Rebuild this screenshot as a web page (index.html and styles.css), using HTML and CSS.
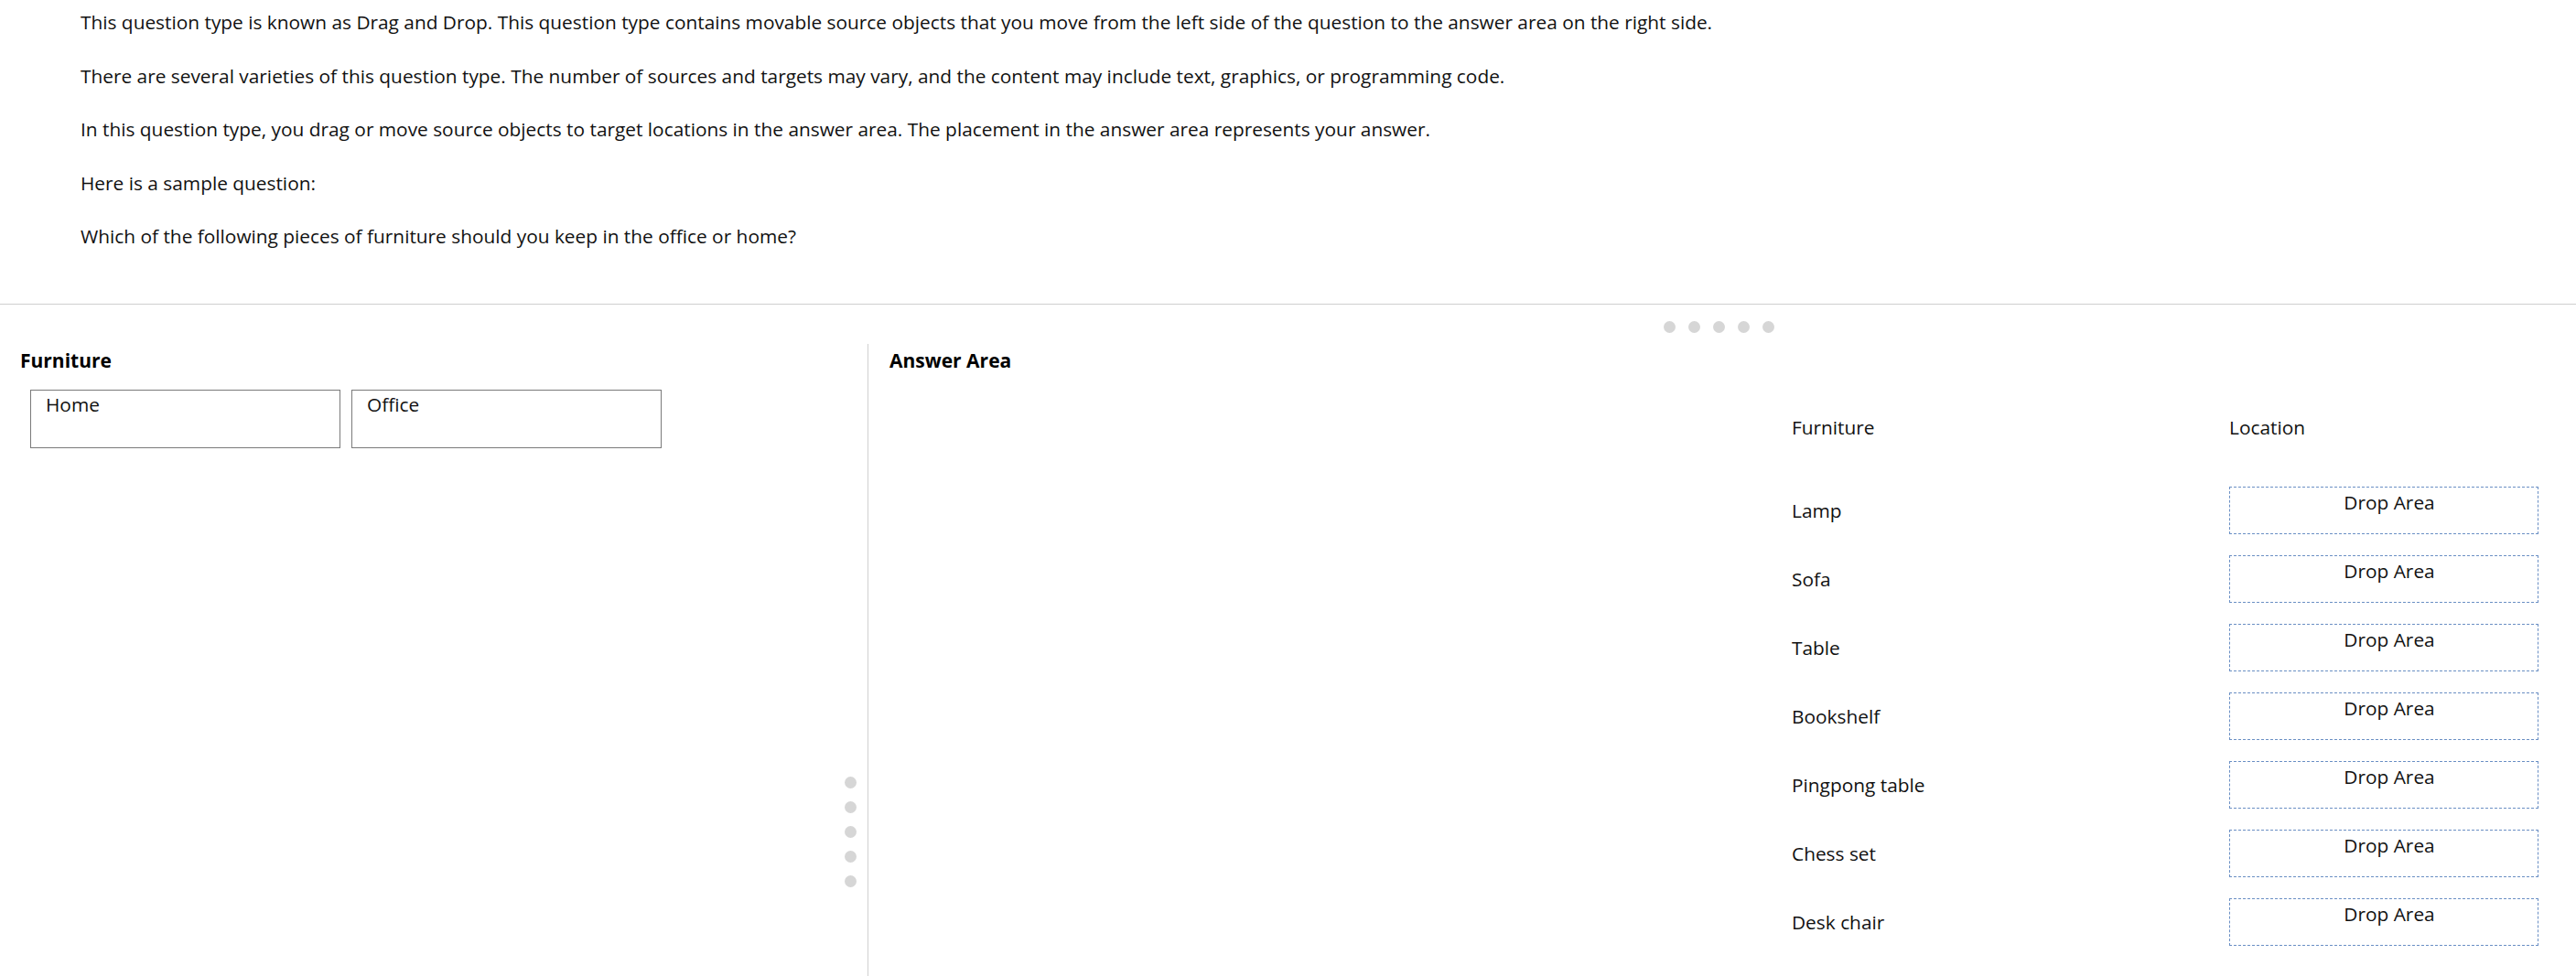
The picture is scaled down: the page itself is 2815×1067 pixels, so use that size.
FILE: index.html
```html
<!DOCTYPE html>
<html lang="en">
<head>
<meta charset="utf-8">
<title>Drag and Drop</title>
<link rel="stylesheet" href="styles.css">
</head>
<body>
<section class="intro">
  <p>This question type is known as Drag and Drop. This question type contains movable source objects that you move from the left side of the question to the answer area on the right side.</p>
  <p>There are several varieties of this question type. The number of sources and targets may vary, and the content may include text, graphics, or programming code.</p>
  <p>In this question type, you drag or move source objects to target locations in the answer area. The placement in the answer area represents your answer.</p>
  <p>Here is a sample question:</p>
  <p>Which of the following pieces of furniture should you keep in the office or home?</p>
</section>
<div class="hgrip-row">
  <div class="hgrip-spacer"></div>
  <div class="grip grip-h"><span></span><span></span><span></span><span></span><span></span></div>
</div>
<main class="panels">
  <section class="source">
    <h2 class="pane-title">Furniture</h2>
    <div class="tiles">
      <div class="tile">Home</div>
      <div class="tile">Office</div>
    </div>
    <div class="grip grip-v"><span></span><span></span><span></span><span></span><span></span></div>
  </section>
  <section class="answer">
    <h2 class="pane-title">Answer Area</h2>
    <div class="table">
      <div class="head">Furniture</div>
      <div class="head">Location</div>
      <div class="label">Lamp</div>
      <div class="drop">Drop Area</div>
      <div class="label">Sofa</div>
      <div class="drop">Drop Area</div>
      <div class="label">Table</div>
      <div class="drop">Drop Area</div>
      <div class="label">Bookshelf</div>
      <div class="drop">Drop Area</div>
      <div class="label">Pingpong table</div>
      <div class="drop">Drop Area</div>
      <div class="label">Chess set</div>
      <div class="drop">Drop Area</div>
      <div class="label">Desk chair</div>
      <div class="drop">Drop Area</div>
    </div>
  </section>
</main>
</body>
</html>
```
FILE: styles.css
```css
* { box-sizing: border-box; }
html, body {
  margin: 0;
  background: #fff;
  color: #111;
  font-family: "Open Sans", "Noto Sans", "Liberation Sans", sans-serif;
  font-size: 20.85px;
  line-height: 28px;
}
.intro {
  padding: 10px 88px 0;
  height: 333px;
  border-bottom: 1px solid #cfcfcf;
}
.intro p {
  margin: 0 0 30.5px;
}
.hgrip-row {
  display: grid;
  grid-template-columns: 948px 1fr;
  height: 43px;
}
.grip {
  display: flex;
  gap: 14px;
}
.grip span {
  width: 13px;
  height: 13px;
  border-radius: 50%;
  background: #d6d6d6;
}
.grip-h {
  justify-content: center;
  padding-top: 18px;
  padding-right: 6px;
}
.panels {
  display: grid;
  grid-template-columns: 948px 1fr;
  min-height: 691px;
}
.source {
  position: relative;
  padding: 4px 0 0 22px;
}
.pane-title {
  margin: 0;
  font-size: 21px;
  line-height: 28px;
  font-weight: 700;
  color: #000;
}
.tiles {
  display: flex;
  gap: 12px;
  margin: 18px 0 0 11px;
}
.tile {
  width: 339px;
  height: 64px;
  border: 1px solid #7a7a7a;
  padding: 1px 16px 0;
}
.grip-v {
  position: absolute;
  left: 923px;
  top: 473px;
  flex-direction: column;
}
.answer {
  border-left: 1px solid #d0d0d0;
  padding: 4px 41px 0 23px;
  display: flex;
  flex-direction: column;
}
.table {
  align-self: flex-end;
  display: grid;
  grid-template-columns: 478px 338px;
  grid-template-rows: 56px;
  grid-auto-rows: 52px;
  row-gap: 23px;
  align-items: center;
  margin-top: 45px;
}
.table .head {
  align-self: start;
  line-height: 28px;
}
.drop {
  height: 52px;
  border: 1px dashed #6a8fc4;
  text-align: center;
  align-self: stretch;
  line-height: 28px;
  padding-top: 2px;
  padding-left: 12px;
}
```
